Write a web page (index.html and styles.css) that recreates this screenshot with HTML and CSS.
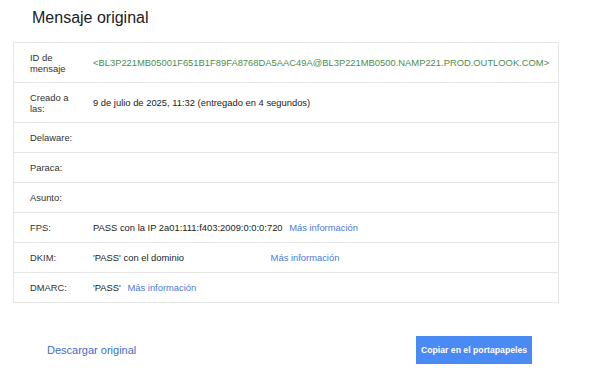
FILE: index.html
```html
<!DOCTYPE html>
<html lang="es">
<head>
  <meta charset="UTF-8">
  <meta name="viewport" content="width=device-width, initial-scale=1.0">
  <title>Mensaje original</title>
  <link rel="stylesheet" href="styles.css">
</head>
<body>

  <h1 class="title">Mensaje original</h1>

  <div class="details">
    <div class="row tall">
      <div class="label">ID de mensaje</div>
      <div class="value msg-id">&lt;BL3P221MB05001F651B1F89FA8768DA5AAC49A@BL3P221MB0500.NAMP221.PROD.OUTLOOK.COM&gt;</div>
    </div>
    <div class="row tall">
      <div class="label">Creado a las:</div>
      <div class="value">9 de julio de 2025, 11:32 (entregado en 4 segundos)</div>
    </div>
    <div class="row">
      <div class="label">Delaware:</div>
      <div class="value"></div>
    </div>
    <div class="row">
      <div class="label">Paraca:</div>
      <div class="value"></div>
    </div>
    <div class="row">
      <div class="label">Asunto:</div>
      <div class="value"></div>
    </div>
    <div class="row">
      <div class="label">FPS:</div>
      <div class="value">PASS con la IP 2a01:111:f403:2009:0:0:0:720 <a class="more" href="#">Más información</a></div>
    </div>
    <div class="row">
      <div class="label">DKIM:</div>
      <div class="value"><span class="domain">'PASS' con el dominio</span> <a class="more" href="#">Más información</a></div>
    </div>
    <div class="row">
      <div class="label">DMARC:</div>
      <div class="value">'PASS' <a class="more" href="#">Más información</a></div>
    </div>
  </div>

  <div class="actions">
    <a class="download" href="#">Descargar original</a>
    <button class="copy-btn">Copiar en el portapapeles</button>
  </div>

</body>
</html>
```

FILE: styles.css
```css
body {
  margin: 0;
  background-color: #fff;
  color: #222;
  font-family: "Liberation Sans", Arial, sans-serif;
}

.title {
  margin: 0 0 13px 0;
  padding: 7px 0 0 32px;
  font-size: 16px;
  line-height: 22px;
  font-weight: normal;
  color: #202124;
}

.details {
  width: 544px;
  margin-left: 13px;
  border: 1px solid #e6e6e6;
  font-size: 9.4px;
}

.row {
  display: flex;
  align-items: center;
  height: 29px;
  border-bottom: 1px solid #e6e6e6;
}

.row:last-child {
  border-bottom: none;
}

.row.tall {
  height: 39px;
}

.label {
  flex-shrink: 0;
  width: 50px;
  padding-left: 16px;
  padding-right: 13px;
  line-height: 11px;
  color: #333;
}

.value {
  flex: 1;
  color: #222;
  white-space: nowrap;
}

.msg-id {
  color: #4b8d4b;
}

.domain {
  display: inline-block;
  width: 171px;
}

.more {
  margin-left: 4px;
  color: #4a7bd8;
  text-decoration: none;
}

.actions {
  display: flex;
  justify-content: space-between;
  align-items: center;
  margin-top: 33px;
  padding: 0 68px 0 47px;
}

.download {
  color: #3d6ccc;
  font-size: 11px;
  text-decoration: none;
}

.copy-btn {
  width: 116px;
  height: 28px;
  padding: 0;
  border: none;
  background-color: #4a8af4;
  color: #fff;
  font-family: "Liberation Sans", Arial, sans-serif;
  font-size: 8.7px;
  font-weight: bold;
  white-space: nowrap;
  cursor: pointer;
}
```
